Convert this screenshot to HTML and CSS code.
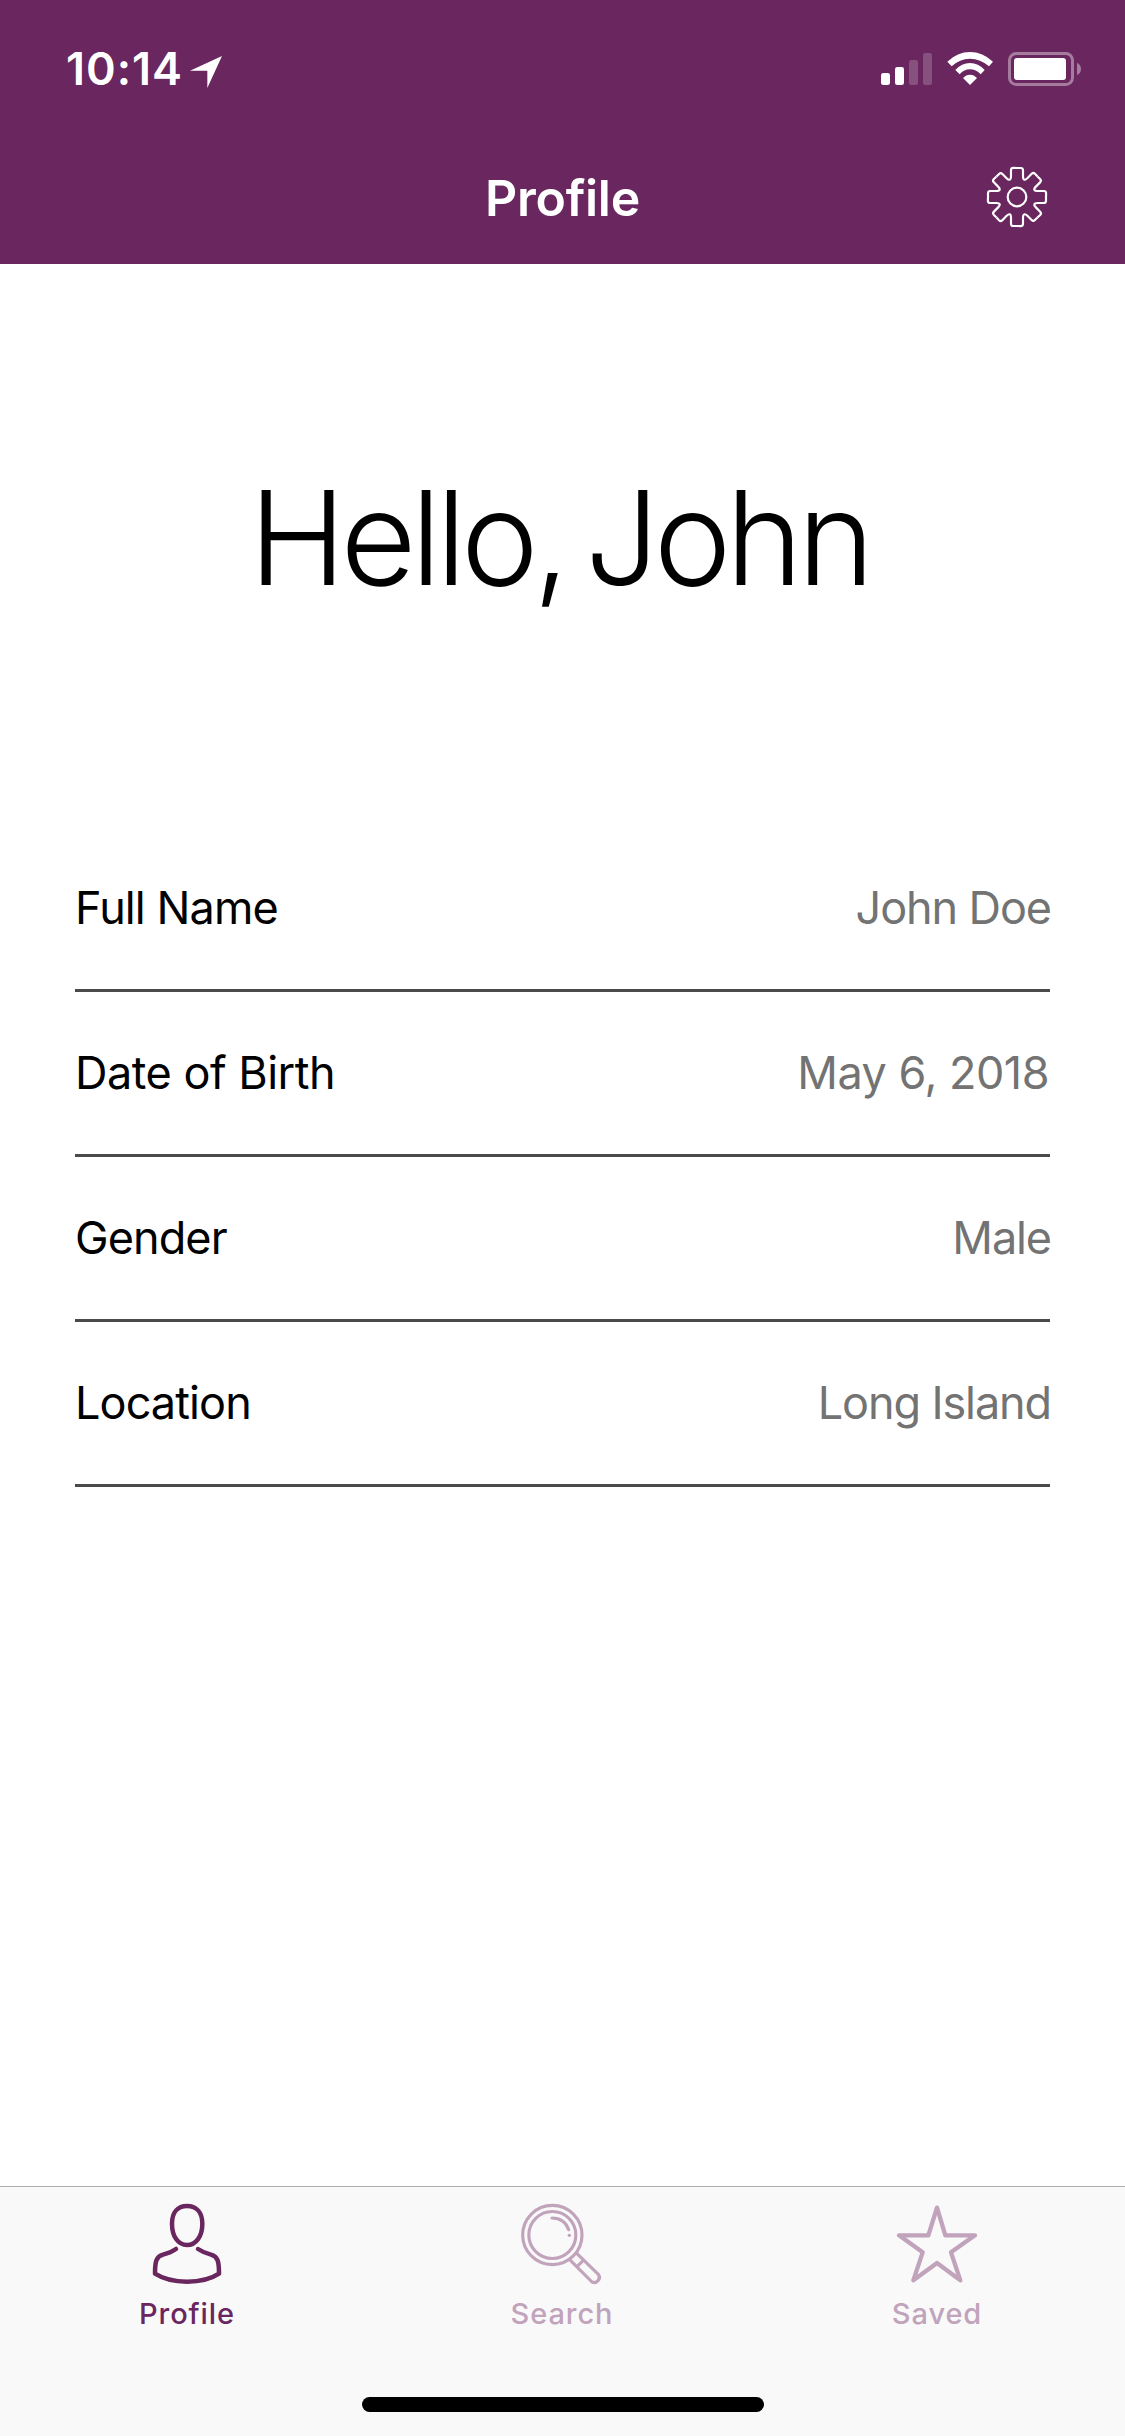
FILE: index.html
```html
<!DOCTYPE html>
<html lang="en">
<head>
<meta charset="utf-8">
<title>Profile</title>
<link rel="stylesheet" href="styles.css">
</head>
<body>
<div class="app">
  <header class="header">
    <div class="status">
      <span class="time">10:14</span>
      <svg class="location" width="32" height="32" viewBox="0 0 96 96"><path d="M96 0 52 96V44H0Z"/></svg>
      <div class="indicators">
        <svg width="51" height="38" viewBox="63 60 153 114">
          <rect x="63" y="129" width="27" height="36" rx="7"/>
          <rect x="105" y="111" width="27" height="54" rx="7"/>
          <rect class="dim" x="147" y="90" width="27" height="75" rx="7"/>
          <rect class="dim" x="189" y="69" width="27" height="96" rx="7"/>
        </svg>
        <svg width="46" height="38" viewBox="261 60 138 114">
          <path d="M262 95Q292 66 330 66T399 95L387 109Q361 86 330 86T275 109Z"/>
          <path d="M286 120Q305 99 330 99T374 120L362 133Q348 118 330 118T299 133Z"/>
          <path d="M309 144Q318 134 330 134T351 144L330 165Z"/>
        </svg>
        <svg width="74" height="38" viewBox="444 60 222 114">
          <rect class="shell" x="448.500" y="70.500" width="189" height="93" rx="20"/>
          <rect x="462" y="84" width="156" height="66" rx="9"/>
          <path class="cap" d="M651 98Q663 104 663 117T651 135Z"/>
        </svg>
      </div>
    </div>
    <div class="nav">
      <span></span>
      <h1 class="nav-title">Profile</h1>
      <svg class="gear" width="62" height="62" viewBox="-93 -93 186 186">
        <defs><path id="tooth" d="M0-87H11Q18-87 18-80V-62C18-50 24-49 31.100-56.600L44-69.500Q49-74.500 54-69.500L61.500-61.500"/></defs>
        <use href="#tooth"/>
        <use href="#tooth" transform="rotate(45)"/>
        <use href="#tooth" transform="rotate(90)"/>
        <use href="#tooth" transform="rotate(135)"/>
        <use href="#tooth" transform="rotate(180)"/>
        <use href="#tooth" transform="rotate(225)"/>
        <use href="#tooth" transform="rotate(270)"/>
        <use href="#tooth" transform="rotate(315)"/>
        <circle r="28"/>
      </svg>
    </div>
  </header>

  <main class="content">
    <h2 class="greeting">Hello, John</h2>
    <dl class="details">
      <div class="row"><dt>Full Name</dt><dd>John Doe</dd></div>
      <div class="row date"><dt>Date of Birth</dt><dd>May 6, 2018</dd></div>
      <div class="row"><dt>Gender</dt><dd>Male</dd></div>
      <div class="row"><dt>Location</dt><dd>Long Island</dd></div>
    </dl>
  </main>

  <footer class="footer">
    <nav class="tabs">
      <a class="tab active">
        <svg width="80" height="82" viewBox="81 84 240 246">
          <g stroke-width="13.500">
            <path d="M201 93C174 93 156 111 156 146C156 184 174 210 201 210S247 184 247 146C247 111 228 93 201 93Z"/>
            <path d="M168 222C157 230 145 235 129 239C109 245 105 258 105 296C130 312 164 320 201 320S273 312 297 296C297 258 293 245 273 239C257 235 246 230 234 222"/>
          </g>
        </svg>
        <span>Profile</span>
      </a>
      <a class="tab">
        <svg width="80" height="82" viewBox="96 84 240 246">
          <g stroke-width="9.500">
            <circle cx="187" cy="180" r="89"/>
            <circle cx="187" cy="180" r="70.500"/>
            <path d="M186 129C212 129 229 144 236 164"/>
            <path d="M261 236 325 298C334 310 321 328 306 321L242 257M281 255 261 275"/>
            <path d="M238 181h.1" stroke-width="10"/>
          </g>
        </svg>
        <span>Search</span>
      </a>
      <a class="tab">
        <svg width="80" height="82" viewBox="81 84 240 246">
          <path stroke-width="13" d="M201 98 226 181H315L243 232 271 316 201 264 130 316 158 232 87 181H175Z"/>
        </svg>
        <span>Saved</span>
      </a>
    </nav>
    <div class="home-indicator"></div>
  </footer>
</div>
</body>
</html>
```
FILE: styles.css
```css
* { box-sizing: border-box; margin: 0; padding: 0; }

body {
  background: #fff;
  color: #000;
  font-family: Inter, "Liberation Sans", sans-serif;
}

.app {
  display: flex;
  flex-direction: column;
  width: 1125px;
  height: 2436px;
}

.header {
  height: 264px;
  background: #6a265e;
  color: #fff;
}

.status {
  display: flex;
  align-items: center;
  height: 132px;
  padding: 6px 43px 0 66px;
  fill: #fff;
}

.time {
  width: 124px;
  font-size: 45px;
  font-weight: 600;
  line-height: 54px;
  letter-spacing: 1px;
  white-space: nowrap;
}

.location { margin-top: 6px; }

.indicators { display: flex; gap: 15px; margin-left: auto; }
.indicators svg { display: block; }
.dim { opacity: .2; }
.shell { fill: none; stroke: #fff; stroke-width: 9; opacity: .4; }
.cap { opacity: .4; }

.nav {
  display: grid;
  grid-template-columns: 1fr auto 1fr;
  align-items: center;
  height: 132px;
  padding: 0 77px;
}

.nav-title {
  font-size: 50px;
  font-weight: 600;
  line-height: 60px;
  letter-spacing: -.3px;
}

.gear {
  justify-self: end;
  margin-bottom: 2px;
  fill: none;
  stroke: #fff;
  stroke-width: 6.500;
}

.content { flex: 1; padding: 0 75px; }

.greeting {
  height: 563px;
  padding: 194px 7px 0 0;
  font-size: 131px;
  font-weight: 300;
  line-height: 160px;
  letter-spacing: -5.500px;
  word-spacing: -11px;
  text-align: center;
  white-space: nowrap;
}

.row {
  display: flex;
  align-items: center;
  justify-content: space-between;
  height: 165px;
  border-bottom: 3px solid #4a4a4a;
  font-size: 45px;
  line-height: 54px;
  letter-spacing: -.9px;
}

.row dd { color: #737373; margin-right: -1px; letter-spacing: -1.1px; }
.row.date,
.row.date dd { letter-spacing: -.5px; }
.row.date dd { margin-right: 1px; }

.footer {
  height: 250px;
  background: #f9f9f9;
  border-top: 1px solid #adadad;
}

.tabs {
  display: grid;
  grid-template-columns: 374px 376px 374px;
  height: 210px;
  padding-top: 16px;
}

.tab {
  display: flex;
  flex-direction: column;
  align-items: center;
  gap: 11px;
  color: #c1a3bc;
  font-size: 29px;
  font-weight: 500;
  line-height: 36px;
  letter-spacing: .9px;
}

.tab.active { color: #6a265e; }

.tab svg {
  display: block;
  overflow: visible;
  fill: none;
  stroke: currentColor;
  stroke-linecap: round;
  stroke-linejoin: round;
}

.home-indicator {
  width: 402px;
  height: 15px;
  margin-left: 362px;
  border-radius: 8px;
  background: #000;
}
```
